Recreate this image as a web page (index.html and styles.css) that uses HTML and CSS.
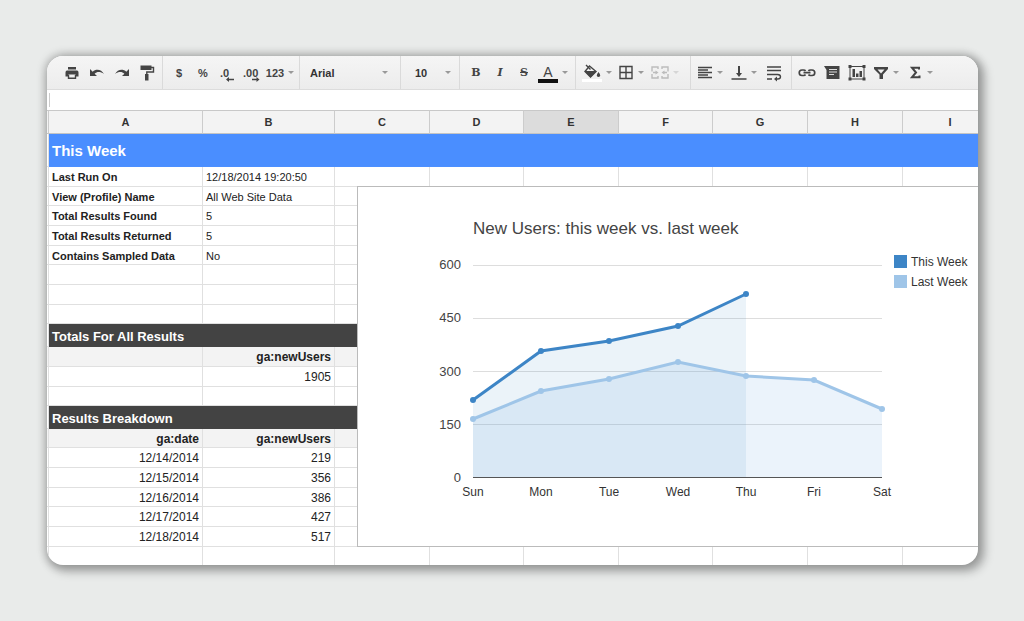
FILE: index.html
```html
<!DOCTYPE html>
<html lang="en">
<head>
<meta charset="utf-8">
<title>Analytics report</title>
<link rel="stylesheet" href="styles.css">
</head>
<body>
<main class="window">
  <div class="toolbar" role="toolbar" aria-label="Formatting">
    <div class="group first">
      <button class="tool" aria-label="Print"><svg class="icon" viewBox="0 0 16 16"><path class="fill" d="M4 2h8v2.500H4zM3 5.500h10q1.500 0 1.500 2V11.500h-3v-2h-7v2h-3V7.500q0-2 1.500-2z"/><path class="line thin" d="M4.500 10v3.300h7V10"/></svg></button>
      <button class="tool" aria-label="Undo"><svg class="icon" viewBox="0 0 16 16"><path class="fill" d="M1 4v7h7L5.600 8.700C8 6.500 11.500 6.500 15 9 12.500 4.200 7 3.500 3.700 6.700z"/></svg></button>
      <button class="tool" aria-label="Redo"><svg class="icon" viewBox="0 0 16 16"><path class="fill" d="M15 4v7H8L10.400 8.700C8 6.500 4.500 6.500 1 9 3.500 4.200 9 3.500 12.300 6.700z"/></svg></button>
      <button class="tool" aria-label="Paint format"><svg class="icon" viewBox="0 0 16 16"><path class="fill" d="M1.500.500h11v4.500h-11zM6 9h3.500v6.500H6z"/><path class="line thin" d="M12 2.500h2.500v4.500H7.800v3"/></svg></button>
    </div>
    <div class="group number">
      <button class="tool">$</button>
      <button class="tool">%</button>
      <button class="tool" aria-label="Decrease decimal places"><svg class="icon wide" viewBox="0 0 18 16"><text class="glyph" x="2" y="12">.0</text><path class="line thin" d="M9 14.500h7"/><path class="fill" d="M8 14.500l3-2.500v5z"/></svg></button>
      <button class="tool" aria-label="Increase decimal places"><svg class="icon wide" viewBox="0 0 18 16"><text class="glyph" x="1" y="12">.00</text><path class="line thin" d="M10 14.500h6"/><path class="fill" d="M17.500 14.500l-3-2.500v5z"/></svg></button>
      <button class="tool menu">123<span class="arrow"></span></button>
    </div>
    <div class="group font">
      <select class="pick" aria-label="Font"><option>Arial</option></select><span class="arrow"></span>
    </div>
    <div class="group size">
      <select class="pick" aria-label="Font size"><option>10</option></select><span class="arrow"></span>
    </div>
    <div class="group style">
      <button class="tool serif">B</button>
      <button class="tool serif slant">I</button>
      <button class="tool serif strike">S</button>
      <button class="tool menu" aria-label="Text color"><svg class="icon ink" viewBox="0 0 20 20"><text class="letter" x="10" y="14" text-anchor="middle">A</text><path class="black" d="M0 16h20v4H0z"/></svg><span class="arrow"></span></button>
    </div>
    <div class="group fillgroup">
      <button class="tool menu" aria-label="Fill color"><svg class="icon ink" viewBox="0 0 20 20"><path class="white" d="M0 16h20v3H0z"/><path class="line thin" d="M4 2l4.500 4.500M7.500 3l6.500 5.500-5.500 5.500-5.500-5.500z"/><path class="fill" d="M2.500 8h12l-6 6.500zM16.500 9q3.500 4.500 0 5-3.500-.500 0-5z"/></svg><span class="arrow"></span></button>
      <button class="tool menu" aria-label="Borders"><svg class="icon" viewBox="0 0 16 16"><path class="line thin" d="M2 1.500h12v12H2zM8 1.500v12M2 7.500h12"/></svg><span class="arrow"></span></button>
      <button class="tool menu" aria-label="Merge cells" disabled><svg class="icon wide" viewBox="0 0 18 16"><path class="line thin" d="M7 4V2H1v3m0 5v3h6v-2M11 4V2h6v3m0 5v3h-6v-2M2 7.500h4M16 7.500h-4M1 5v1.500M1 9v1.500M17 5v1.500M17 9v1.500"/><path class="fill" d="M7.500 7.500l-3-2v4zM10.500 7.500l3-2v4z"/></svg><span class="arrow"></span></button>
    </div>
    <div class="group align">
      <button class="tool menu" aria-label="Horizontal align"><svg class="icon" viewBox="0 0 16 16"><path class="line thin" d="M1 2.500h14M1 5h10M1 7.500h14M1 10h10M1 12.500h14"/></svg><span class="arrow"></span></button>
      <button class="tool menu" aria-label="Vertical align"><svg class="icon" viewBox="0 0 16 16"><path class="line" d="M8 1v8"/><path class="line thin" d="M.500 14h15"/><path class="fill" d="M5 8h6l-3 4z"/></svg><span class="arrow"></span></button>
      <button class="tool" aria-label="Wrap text"><svg class="icon" viewBox="0 0 16 16"><path class="line thin" d="M1 2h14M1 5.500h14M1 9.500h10.500q3 0 3 2.200t-3 2.300H10M1 14h5"/><path class="fill" d="M8 14l3-2.500v5z"/></svg></button>
    </div>
    <div class="group insert">
      <button class="tool" aria-label="Insert link"><svg class="icon wide" viewBox="0 0 18 16"><path class="line mid" d="M7.500 9.500Q7 10.500 5.500 10.500h-1.500a2.700 2.700 0 0 1 0-5.500h1.500Q7 5 7.500 6M10.500 6Q11 5 12.500 5h1.500a2.700 2.700 0 0 1 0 5.500h-1.500Q11 10.500 10.500 9.500M5.500 7.700h7"/></svg></button>
      <button class="tool" aria-label="Insert comment"><svg class="icon" viewBox="0 0 16 16"><path class="fill" d="M0 1h15.500v13H2.500V5z"/><path class="pale" d="M5 4.500h8M5 7h8M5 9.500h5"/></svg></button>
      <button class="tool" aria-label="Insert chart"><svg class="icon wide" viewBox="0 0 18 16"><path class="line hair" d="M2 1.500h14v12.500H2z"/><path class="fill" d="M.500 0h3v3h-3zM14.500 0h3v3h-3zM.500 12.500h3v3h-3zM14.500 12.500h3v3h-3zM4.500 4H7v8H4.500zM8 8.500h2.500v3.500H8zM11.500 6H14v6h-2.500z"/></svg></button>
      <button class="tool menu" aria-label="Filter"><svg class="icon" viewBox="0 0 16 16"><path class="fill" fill-rule="evenodd" d="M1 2h14v2L10 9.500V14H6.500V9.500L1 4zM4.500 4.500L8 8.500 11.500 4.500z"/></svg><span class="arrow"></span></button>
      <button class="tool menu" aria-label="Functions"><svg class="icon" viewBox="0 0 16 16"><path class="line" d="M12 4.500V2.700H5L9 7.500l-4 4.800h7.500v-1.800"/></svg><span class="arrow"></span></button>
    </div>
  </div>
  <div class="formula"><input class="formula-input" type="text" aria-label="Formula"></div>
  <section class="sheet">
    <table class="grid">
      <colgroup><col class="gutter"><col class="col-a"><col class="col-b"><col class="even"><col class="odd"><col class="even"><col class="odd"><col class="even"><col class="even"><col class="even"></colgroup>
      <thead>
        <tr class="letters"><th></th><th>A</th><th>B</th><th>C</th><th>D</th><th class="active">E</th><th>F</th><th>G</th><th>H</th><th>I</th></tr>
      </thead>
      <tbody>
        <tr class="banner"><td></td><th colspan="9" scope="rowgroup">This Week</th></tr>
        <tr><td></td><th scope="row">Last Run On</th><td>12/18/2014 19:20:50</td><td></td><td></td><td></td><td></td><td></td><td></td><td></td></tr>
        <tr class="short"><td></td><th scope="row">View (Profile) Name</th><td>All Web Site Data</td><td></td><td></td><td></td><td></td><td></td><td></td><td></td></tr>
        <tr><td></td><th scope="row">Total Results Found</th><td>5</td><td></td><td></td><td></td><td></td><td></td><td></td><td></td></tr>
        <tr><td></td><th scope="row">Total Results Returned</th><td>5</td><td></td><td></td><td></td><td></td><td></td><td></td><td></td></tr>
        <tr class="short"><td></td><th scope="row">Contains Sampled Data</th><td>No</td><td></td><td></td><td></td><td></td><td></td><td></td><td></td></tr>
        <tr><td></td><td></td><td></td><td></td><td></td><td></td><td></td><td></td><td></td><td></td></tr>
        <tr><td></td><td></td><td></td><td></td><td></td><td></td><td></td><td></td><td></td><td></td></tr>
        <tr class="short"><td></td><td></td><td></td><td></td><td></td><td></td><td></td><td></td><td></td><td></td></tr>
      </tbody>
      <tbody class="numbers">
        <tr class="title"><td></td><th colspan="9" scope="rowgroup">Totals For All Results</th></tr>
        <tr class="heads"><td></td><th></th><th>ga:newUsers</th><td></td><td></td><td></td><td></td><td></td><td></td><td></td></tr>
        <tr><td></td><td></td><td>1905</td><td></td><td></td><td></td><td></td><td></td><td></td><td></td></tr>
        <tr class="short"><td></td><td></td><td></td><td></td><td></td><td></td><td></td><td></td><td></td><td></td></tr>
      </tbody>
      <tbody class="numbers">
        <tr class="title"><td></td><th colspan="9" scope="rowgroup">Results Breakdown</th></tr>
        <tr class="heads short"><td></td><th>ga:date</th><th>ga:newUsers</th><td></td><td></td><td></td><td></td><td></td><td></td><td></td></tr>
        <tr><td></td><td>12/14/2014</td><td>219</td><td></td><td></td><td></td><td></td><td></td><td></td><td></td></tr>
        <tr><td></td><td>12/15/2014</td><td>356</td><td></td><td></td><td></td><td></td><td></td><td></td><td></td></tr>
        <tr class="short"><td></td><td>12/16/2014</td><td>386</td><td></td><td></td><td></td><td></td><td></td><td></td><td></td></tr>
        <tr><td></td><td>12/17/2014</td><td>427</td><td></td><td></td><td></td><td></td><td></td><td></td><td></td></tr>
        <tr><td></td><td>12/18/2014</td><td>517</td><td></td><td></td><td></td><td></td><td></td><td></td><td></td></tr>
        <tr class="last"><td></td><td></td><td></td><td></td><td></td><td></td><td></td><td></td><td></td><td></td></tr>
      </tbody>
    </table>
    <figure class="chart">
      <svg class="plot" width="620" height="359" viewBox="0 0 620 359" role="img" aria-label="New Users: this week vs. last week">
        <text class="heading" x="115" y="47">New Users: this week vs. last week</text>
        <path class="rule" d="M115 78h409M115 131h409M115 184h409M115 237h409"/>
        <path class="area-this" d="M115 213L183 164 251 154 320 139 388 107V290H115z"/>
        <path class="area-last" d="M115 232L183 204 251 192 320 175 388 189 456 193 524 222V290H115z"/>
        <path class="axis" d="M115 290h409"/>
        <path class="curve-last" d="M115 232L183 204 251 192 320 175 388 189 456 193 524 222"/>
        <g class="dots-last"><circle cx="115" cy="232" r="3"/><circle cx="183" cy="204" r="3"/><circle cx="251" cy="192" r="3"/><circle cx="320" cy="175" r="3"/><circle cx="388" cy="189" r="3"/><circle cx="456" cy="193" r="3"/><circle cx="524" cy="222" r="3"/></g>
        <path class="curve-this" d="M115 213L183 164 251 154 320 139 388 107"/>
        <g class="dots-this"><circle cx="115" cy="213" r="3"/><circle cx="183" cy="164" r="3"/><circle cx="251" cy="154" r="3"/><circle cx="320" cy="139" r="3"/><circle cx="388" cy="107" r="3"/></g>
        <g class="ylabels"><text x="103" y="82">600</text><text x="103" y="135">450</text><text x="103" y="189">300</text><text x="103" y="242">150</text><text x="103" y="295">0</text></g>
        <g class="xlabels"><text x="115" y="309">Sun</text><text x="183" y="309">Mon</text><text x="251" y="309">Tue</text><text x="320" y="309">Wed</text><text x="388" y="309">Thu</text><text x="456" y="309">Fri</text><text x="524" y="309">Sat</text></g>
        <g class="legend"><path class="key-this" d="M536 68h13v13h-13z"/><text x="553" y="79">This Week</text><path class="key-last" d="M536 88h13v13h-13z"/><text x="553" y="99">Last Week</text></g>
      </svg>
    </figure>
  </section>
</main>
</body>
</html>
```
FILE: styles.css
```css
* { box-sizing: border-box; }

body {
  margin: 0;
  min-height: 100vh;
  padding: 56px 46px 56px 47px;
  background: #e9ebea;
  font-family: "Liberation Sans", Arial, sans-serif;
  font-size: 11px;
  color: #222;
}

.window {
  overflow: hidden;
  border-radius: 16px;
  background: #fff;
  box-shadow: 4px 4px 10px 3px rgba(0, 0, 0, 0.25), 0 0 10px 2px rgba(0, 0, 0, 0.2);
}

/* Toolbar */
.toolbar {
  display: flex;
  height: 34px;
  background: linear-gradient(#f5f5f5, #ececec);
  border-bottom: 1px solid #dcdcdc;
}
.group {
  display: flex;
  align-items: center;
  flex: none;
  width: 137px;
  padding-left: 4px;
  border-right: 1px solid #dadada;
}
.first { width: 116px; padding-left: 12px; }
.font { width: 101px; padding-left: 10px; }
.size { width: 59px; padding-left: 14px; }
.style { width: 116px; }
.fillgroup { width: 115px; }
.align { width: 101px; padding-left: 2px; }
.insert { flex: 1; padding-left: 2px; border-right: 0; }

.tool {
  display: flex;
  align-items: center;
  justify-content: center;
  flex: none;
  width: 25px;
  height: 28px;
  padding: 0;
  border: 0;
  background: none;
  font: bold 11px "Liberation Sans", Arial, sans-serif;
  color: #444;
}
.first .tool, .number .tool, .style .tool { width: 24px; }
.first .tool { width: 25px; }
.tool:disabled { opacity: 0.3; }
.toolbar .menu { width: 34px; gap: 4px; }
.serif { font: bold 11px "DejaVu Serif", serif; }
.slant { font-style: italic; }
.strike { text-decoration: line-through; }
.arrow {
  flex: none;
  border: 3px solid transparent;
  border-top-color: #999;
  border-bottom: 0;
}
.pick {
  flex: 1;
  min-width: 0;
  padding: 0;
  border: 0;
  appearance: none;
  background: none;
  font: bold 11px "Liberation Sans", Arial, sans-serif;
  color: #333;
}
.font .arrow { margin-right: 12px; }
.size .arrow { margin-right: 8px; }

.icon { flex: none; width: 16px; height: 16px; overflow: visible; }
.wide { width: 18px; }
.ink { width: 20px; height: 20px; }
.fill { fill: #444; }
.line { fill: none; stroke: #444; stroke-width: 2; }
.mid { stroke-width: 1.7; }
.thin { stroke-width: 1.4; }
.hair { stroke-width: 1; }
.black { fill: #111; }
.white { fill: #fff; }
.pale { fill: none; stroke: #ddd; }
.glyph { font-size: 11px; font-weight: bold; fill: #444; }
.letter { font-size: 14px; font-weight: normal; fill: #444; }

.formula { display: flex; height: 20px; padding: 3px 2px; }
.formula-input {
  flex: 1;
  min-width: 0;
  border: 0;
  border-left: 1px solid #ccc;
  background: none;
}

/* Spreadsheet */
.sheet { position: relative; overflow: hidden; }
.grid {
  width: 100%;
  table-layout: fixed;
  border-collapse: separate;
  border-spacing: 0;
}
.gutter { width: 2px; }
.col-a { width: 154px; }
.col-b { width: 132px; }
.even { width: 95px; }
.odd { width: 94px; }
.grid th, .grid td {
  height: 20px;
  padding: 1px 3px 0;
  border-right: 1px solid #e0e0e0;
  border-bottom: 1px solid #e0e0e0;
  line-height: 16px;
  text-align: left;
  white-space: nowrap;
}
.grid td:first-child, .grid th:first-child { padding: 0; }
.grid .short th, .grid .short td { height: 19px; }
.grid .last td { height: 18px; border-bottom: 0; }
.grid .letters th {
  height: 24px;
  padding-top: 0;
  border-top: 1px solid #c8c8c8;
  border-bottom-color: #c4c4c4;
  border-right-color: #ccc;
  background: #f3f3f3;
  text-align: center;
  color: #333;
}
.grid .letters .active { background: #dcdcdc; }
.grid .banner th {
  height: 33px;
  padding-top: 2px;
  border-color: #4c8fff;
  background: #4a8eff;
  font-size: 15px;
  color: #fff;
}
.numbers { font-size: 12px; }
.grid .numbers th, .grid .numbers td { text-align: right; }
.grid .title th {
  height: 23px;
  padding-top: 3px;
  border-color: #434343;
  background: #434343;
  font-size: 13px;
  color: #fff;
}
.grid .numbers .title th { text-align: left; }
.heads th, .heads td { background: #f3f3f3; }

/* Chart laid over the cells */
.chart {
  position: absolute;
  top: 76px;
  left: 310px;
  right: 0;
  margin: 0;
  border: 1px solid #bbb;
  border-right: 0;
  background: #fff;
}
.plot { display: block; }
.heading { font-size: 17px; fill: #444; }
.rule { stroke: #ddd; stroke-width: 1; fill: none; }
.axis { stroke: #555; fill: none; }
.rule, .axis { shape-rendering: crispEdges; }
.area-this { fill: rgba(61, 133, 198, 0.1); }
.area-last { fill: rgba(110, 170, 230, 0.14); }
.curve-this, .curve-last { fill: none; stroke-width: 3; }
.curve-this { stroke: #3d85c6; }
.curve-last { stroke: #9fc5e8; }
.dots-this, .key-this { fill: #3d85c6; }
.dots-last, .key-last { fill: #9fc5e8; }
.ylabels { font-size: 13px; fill: #444; text-anchor: end; }
.xlabels { font-size: 12px; fill: #333; text-anchor: middle; }
.legend { font-size: 12px; }
.legend text { fill: #333; }
```
